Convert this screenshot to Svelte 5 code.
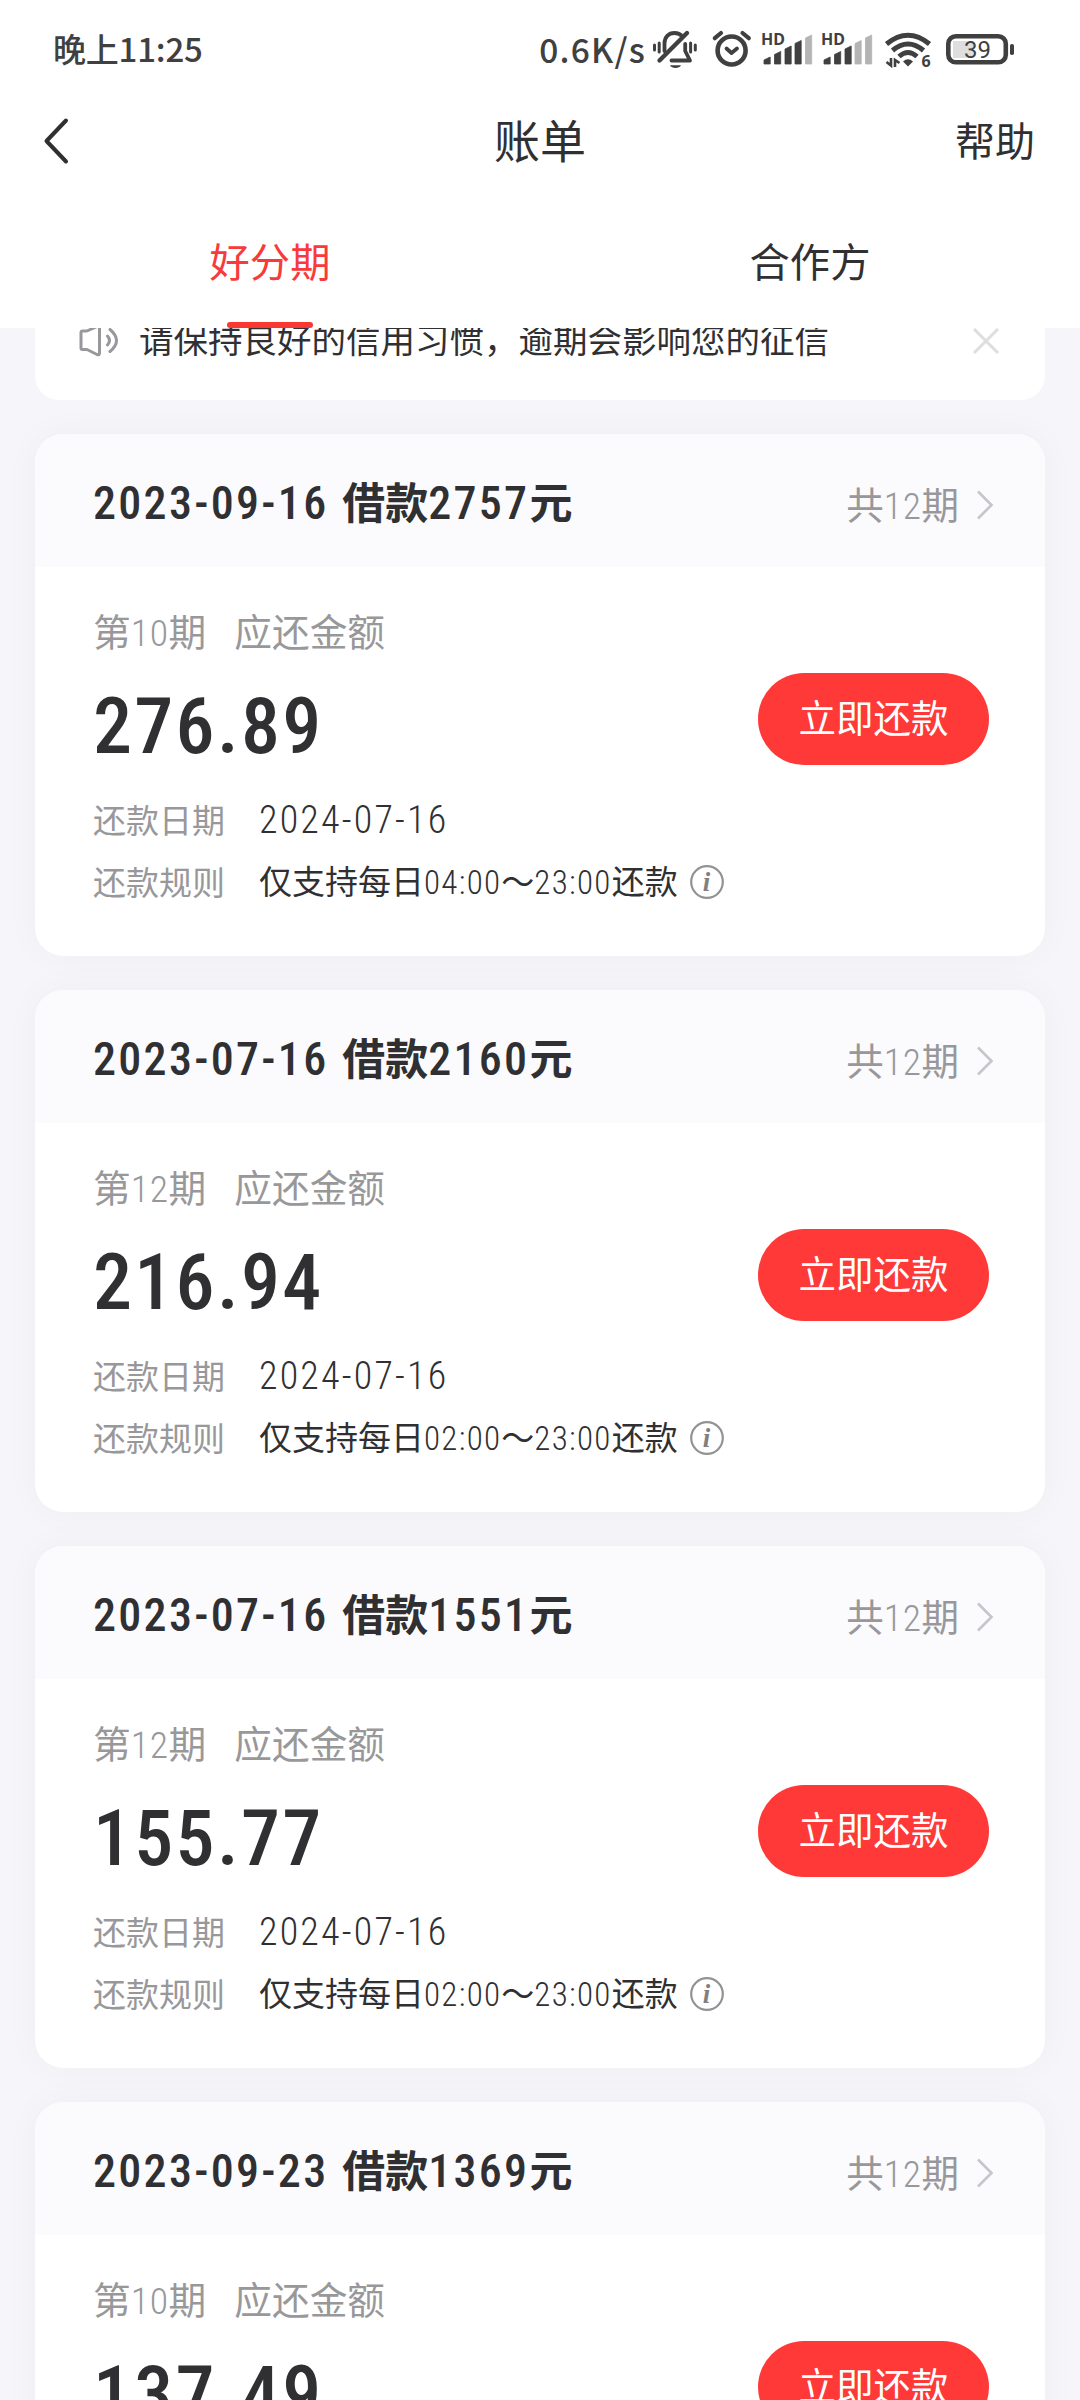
<script>
    const tabs = ['好分期', '合作方'];
    let active = $state(0);

    const bills = [
        { date: '2023-09-16', total: '2757', terms: '12', term: '10', amount: '276.89', due: '2024-07-16', from: '04:00', to: '23:00' },
        { date: '2023-07-16', total: '2160', terms: '12', term: '12', amount: '216.94', due: '2024-07-16', from: '02:00', to: '23:00' },
        { date: '2023-07-16', total: '1551', terms: '12', term: '12', amount: '155.77', due: '2024-07-16', from: '02:00', to: '23:00' },
        { date: '2023-09-23', total: '1369', terms: '12', term: '10', amount: '137.49', due: '2024-07-16', from: '02:00', to: '23:00' }
    ];

    // left edge and top of each signal bar
    const bars = [[4, 27], [14.5, 21.5], [25, 16], [35, 10.5], [45.5, 5]];
</script>

{#snippet signal(level)}
    <svg class="signal" width="54" height="40" viewBox="0 0 54 40">
        <text x="1" y="15" class="hd">HD</text>
        {#each bars as [x, y], i}
            <path
                d="M{x} 34V{y + 3}L{x + 6.2} {y}V34Z"
                stroke-width="0.8"
                stroke-linejoin="round"
                class={i < level ? 'on' : 'off'}
            />
        {/each}
    </svg>
{/snippet}

<div class="page">
    <header>
        <div class="status">
            <span class="time">晚上11:25</span>
            <span class="rate">0.6K/s</span>
            <svg class="bell" width="50" height="40" viewBox="0 0 50 40" fill="none" stroke="#404040" stroke-width="3.8" stroke-linecap="round">
                <path d="M14.5 21V13.5C14.5 7 18.5 3 24.5 3C28 3 30.5 4.2 32.2 6.2" />
                <path d="M35.2 14V21L40 30.5H21.5" stroke-linejoin="round" />
                <path d="M9.5 30.5L37 3" stroke-width="4.4" />
                <path d="M20 35.2H31C29.5 38.8 21.5 38.8 20 35.2Z" fill="#404040" stroke="none" />
                <path d="M4.5 15V20M9.2 13V22M40.6 13V22M45.3 15V20" stroke-width="3" />
            </svg>
            <svg class="alarm" width="44" height="40" viewBox="0 0 44 40" fill="none" stroke="#404040" stroke-linecap="round">
                <circle cx="21.6" cy="20.5" r="14" stroke-width="4.6" />
                <path d="M16.5 18.5L21.5 23L27 18.5" stroke-width="3.8" stroke-linejoin="round" />
                <path d="M4.8 8.2L11 3M32.5 3L38.8 8.2" stroke-width="4.2" />
            </svg>
            {@render signal(4)}
            {@render signal(3)}
            <svg class="wifi" width="54" height="40" viewBox="0 0 54 40" fill="none" stroke="#404040" stroke-width="5">
                <path d="M4.5 14Q26 -3.5 47.5 14" />
                <path d="M10.5 20.5Q26 7.5 41.5 20.5" />
                <path d="M17 26.5Q26 18.5 35 26.5" />
                <path d="M21 31.5Q26 27 31 31.5L26 36.5Z" fill="#404040" stroke="none" />
                <path d="M9 28V35.5L4.5 32M13 37V30L17.5 33" stroke-width="2.6" />
                <text x="39.5" y="37" class="six">6</text>
            </svg>
            <svg class="battery" width="72" height="40" viewBox="0 0 72 40">
                <rect x="9" y="11" width="20" height="17" fill="#dedede" />
                <rect x="4.3" y="6.3" width="57.5" height="26" rx="7.5" fill="none" stroke="#404040" stroke-width="4.6" />
                <rect x="66" y="14" width="4" height="11" rx="1.8" fill="#404040" />
                <text x="33.5" y="28" text-anchor="middle" class="level">39</text>
            </svg>
        </div>
        <nav>
            <button class="back" aria-label="返回">
                <svg width="28" height="50" viewBox="0 0 28 50">
                    <path d="M23 4.5L3.5 25L23 45.5" fill="none" stroke="#303033" stroke-width="4" stroke-linecap="round" stroke-linejoin="round" />
                </svg>
            </button>
            <h1>账单</h1>
            <button class="help">帮助</button>
        </nav>
        <div class="tabs">
            {#each tabs as tab, i}
                <button class="tab" class:active={active === i} onclick={() => (active = i)}>{tab}</button>
            {/each}
        </div>
    </header>

    <main>
        <div class="notice">
            <svg width="44" height="40" viewBox="0 0 44 40" fill="none" stroke="#98989c" stroke-width="3" stroke-linejoin="round" stroke-linecap="round">
                <path d="M4 11.5Q4 10 5.5 10H10L20 5.5Q22.5 4.5 22.5 7V32Q22.5 34.5 20 33.5L10 28.5H5.5Q4 28.5 4 27Z" />
                <path d="M30.5 15Q34.5 19.5 30.5 24M33 8.5Q46 19.5 33 30.5" />
            </svg>
            <span>请保持良好的信用习惯，逾期会影响您的征信</span>
            <svg class="close" width="28" height="28" viewBox="0 0 28 28">
                <path d="M2 2L26 26M26 2L2 26" stroke="#dedede" stroke-width="3" />
            </svg>
        </div>

        {#each bills as bill}
            <section class="card">
                <div class="top">
                    <h2><span class="num">{bill.date}</span> 借款<span class="num">{bill.total}</span>元</h2>
                    <span class="terms">共<span class="num">{bill.terms}</span>期</span>
                    <svg width="18" height="32" viewBox="0 0 18 32">
                        <path d="M2 2.5L15.5 16L2 29.5" fill="none" stroke="#c6c6ca" stroke-width="2.6" />
                    </svg>
                </div>
                <div class="body">
                    <div class="label"><span>第<span class="num">{bill.term}</span>期</span><span>应还金额</span></div>
                    <div class="pay">
                        <span class="amount">{bill.amount}</span>
                        <button>立即还款</button>
                    </div>
                    <div class="row">
                        <span class="key">还款日期</span>
                        <span class="due">{bill.due}</span>
                    </div>
                    <div class="row">
                        <span class="key">还款规则</span>
                        <span class="rule">仅支持每日<span class="num">{bill.from}</span>～<span class="num">{bill.to}</span>还款</span>
                        <svg class="info" width="36" height="36" viewBox="0 0 36 36">
                            <circle cx="18" cy="18" r="15.8" fill="none" stroke="#929292" stroke-width="2.2" />
                            <text x="17.5" y="26.5" text-anchor="middle">i</text>
                        </svg>
                    </div>
                </div>
            </section>
        {/each}
    </main>
</div>

<style>
    :global(body) {
        margin: 0;
        background: #f5f5fa;
    }

    .page {
        height: 2400px;
        display: flex;
        flex-direction: column;
        overflow: hidden;
        background: #f5f5fa;
        color: #303033;
        font-family: "Noto Sans CJK SC", sans-serif;
    }

    button {
        margin: 0;
        padding: 0;
        border: none;
        background: transparent;
        color: inherit;
        font-family: inherit;
        cursor: pointer;
    }

    svg {
        display: block;
        flex: none;
        overflow: visible;
    }

    .num {
        font-family: Roboto, sans-serif;
        font-stretch: 85%;
        font-weight: 350;
        letter-spacing: 0.6px;
    }

    header {
        flex: none;
        background: white;
    }

    .status {
        height: 99px;
        display: flex;
        align-items: center;
        padding: 0 64px 0 53px;
        color: #404040;
        font-size: 33px;
        font-weight: 500;
        line-height: 1;
    }

    .time {
        flex: 1;
        padding-bottom: 2px;
        letter-spacing: -0.2px;
    }

    .rate {
        padding-bottom: 2px;
        font-size: 33.5px;
        letter-spacing: 1.2px;
    }

    .bell {
        margin-left: 4px;
    }

    .alarm {
        margin-left: 10px;
    }

    .signal {
        margin-left: 6px;
    }

    .on {
        fill: #404040;
        stroke: #404040;
    }

    .off {
        fill: #b4b4b4;
        stroke: #b4b4b4;
    }

    .hd {
        font: 700 16px "Noto Sans", sans-serif;
        fill: #404040;
    }

    .wifi {
        margin-left: 8px;
    }

    .six {
        font: 700 16px "Noto Sans", sans-serif;
        fill: #404040;
        stroke: none;
    }

    .battery {
        margin-left: 8px;
    }

    .level {
        font: 400 24px Roboto, sans-serif;
        fill: #404040;
    }

    nav {
        height: 84px;
        display: grid;
        grid-template-columns: 1fr auto 1fr;
        align-items: center;
        padding: 0 45px 0 43px;
    }

    .back {
        justify-self: start;
    }

    h1 {
        margin: 0;
        padding: 0 0 5px 2px;
        font-size: 46px;
        font-weight: 400;
        line-height: 79px;
    }

    .help {
        justify-self: end;
        padding-bottom: 3px;
        font-size: 40px;
        line-height: 81px;
    }

    .tabs {
        height: 145px;
        display: grid;
        grid-template-columns: 1fr 1fr;
    }

    .tab {
        display: flex;
        flex-direction: column;
        align-items: center;
        justify-content: space-between;
        padding-top: 47px;
        font-size: 40.3px;
        line-height: 60px;
    }

    .tab.active {
        color: #f93a3c;
    }

    .tab.active::after {
        content: "";
        width: 86px;
        height: 6px;
        border-radius: 3px;
        background: #f93833;
    }

    main {
        flex: 1;
        min-height: 0;
        display: flex;
        flex-direction: column;
        gap: 34px;
        padding: 0 35px;
        overflow: hidden;
    }

    .notice {
        flex: none;
        height: 118px;
        margin-top: -46px;
        display: flex;
        align-items: center;
        padding: 0 45px 0 42px;
        border-radius: 24px;
        background: white;
        font-size: 34.5px;
    }

    .notice span {
        flex: 1;
        margin-left: 18px;
        padding-bottom: 6px;
    }

    .card {
        flex: none;
        height: 522px;
        border-radius: 28px;
        background: white;
        box-shadow: 0 0 36px rgba(60, 60, 70, 0.035);
        overflow: hidden;
    }

    .top {
        height: 133px;
        display: flex;
        align-items: center;
        padding: 0 51px 0 58px;
        background: #fbfbfd;
    }

    h2 {
        flex: 1;
        margin: 0;
        padding-top: 1px;
        font-size: 43px;
        font-weight: 700;
        line-height: 60px;
        word-spacing: 4px;
    }

    h2 .num {
        font-size: 46px;
        font-weight: 480;
        letter-spacing: 2.3px;
    }

    .terms {
        margin: 4px 17px 0 0;
        color: #98989c;
        font-size: 37.5px;
    }

    .top svg {
        margin-top: 8px;
    }

    .body {
        padding: 40px 56px 0 58px;
    }

    .label {
        display: flex;
        gap: 28px;
        color: #98989a;
        font-size: 37.7px;
        line-height: 46px;
    }

    .pay {
        height: 92px;
        margin: 17px 0 23px;
        display: flex;
        align-items: center;
        justify-content: space-between;
    }

    .amount {
        padding-top: 15px;
        font: 500 78px/77px Roboto, sans-serif;
        font-stretch: 85%;
        letter-spacing: 2.3px;
    }

    .pay button {
        width: 231px;
        height: 92px;
        padding-bottom: 7px;
        border-radius: 46px;
        background: #ff3838;
        color: white;
        font-size: 37.5px;
    }

    .row {
        height: 62px;
        display: flex;
        align-items: center;
        font-size: 33px;
    }

    .key {
        width: 166px;
        padding-bottom: 1px;
        color: #98989a;
    }

    .due {
        padding-top: 2px;
        font-family: Roboto, sans-serif;
        font-size: 38px;
        font-weight: 350;
        font-stretch: 85%;
        letter-spacing: 2.2px;
    }

    .rule {
        padding-bottom: 2px;
    }

    .rule .num {
        letter-spacing: 1.3px;
    }

    .info {
        margin: 2px 0 0 11px;
    }

    .info text {
        font: italic 700 27px "Liberation Serif", serif;
        fill: #808080;
    }
</style>
